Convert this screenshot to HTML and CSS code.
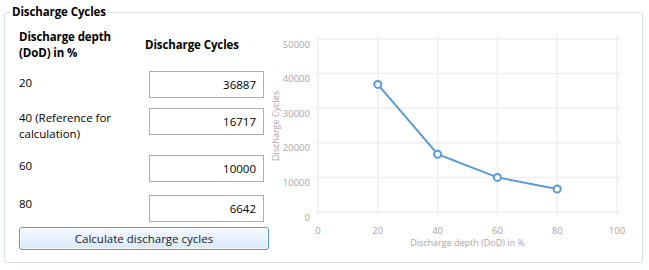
FILE: index.html
```html
<!DOCTYPE html>
<html>
<head>
<meta charset="utf-8">
<link rel="stylesheet" href="styles.css">
</head>
<body>
<fieldset class="group">
  <legend class="group-title">Discharge Cycles</legend>
  <div class="content">
    <div class="form">
      <div class="head head-left">Discharge depth<br>(DoD) in %</div>
      <div class="head head-right">Discharge Cycles</div>

      <div class="lbl r1">20</div>
      <div class="field"><input class="num" value="36887"></div>

      <div class="lbl r2">40 (Reference for<br>calculation)</div>
      <div class="field"><input class="num" value="16717"></div>

      <div class="lbl r3">60</div>
      <div class="field"><input class="num" value="10000"></div>

      <div class="lbl r4">80</div>
      <div class="field"><input class="num" value="6642"></div>

      <button class="calc">Calculate discharge cycles</button>
    </div>
    <svg class="chart" width="360" height="235" viewBox="0 0 360 235">
      <g class="grid">
        <line x1="45" y1="192" x2="351" y2="192"/>
        <line x1="45" y1="157.4" x2="351" y2="157.4"/>
        <line x1="45" y1="122.8" x2="351" y2="122.8"/>
        <line x1="45" y1="88.2" x2="351" y2="88.2"/>
        <line x1="45" y1="53.6" x2="351" y2="53.6"/>
        <line x1="45" y1="19" x2="351" y2="19"/>
        <line x1="48" y1="15" x2="48" y2="195"/>
        <line x1="107.8" y1="15" x2="107.8" y2="195"/>
        <line x1="167.6" y1="15" x2="167.6" y2="195"/>
        <line x1="227.4" y1="15" x2="227.4" y2="195"/>
        <line x1="287.2" y1="15" x2="287.2" y2="195"/>
        <line x1="347" y1="15" x2="347" y2="195"/>
      </g>
      <g class="ylab">
        <text x="40" y="200.5">0</text>
        <text x="40" y="165.9">10000</text>
        <text x="40" y="131.3">20000</text>
        <text x="40" y="96.7">30000</text>
        <text x="40" y="62.1">40000</text>
        <text x="40" y="27.5">50000</text>
      </g>
      <g class="xlab">
        <text x="48" y="214">0</text>
        <text x="107.8" y="214">20</text>
        <text x="167.6" y="214">40</text>
        <text x="227.4" y="214">60</text>
        <text x="287.2" y="214">80</text>
        <text x="347" y="214">100</text>
      </g>
      <text class="axis-title" x="197.5" y="226">Discharge depth (DoD) in %</text>
      <text class="axis-title" transform="translate(8.5 106) rotate(-90)" x="0" y="0">Discharge Cycles</text>
      <polyline class="series" points="107.8,64.4 167.6,134.2 227.4,157.4 287.2,169"/>
      <g class="pts">
        <circle cx="107.8" cy="64.4" r="3.5"/>
        <circle cx="167.6" cy="134.2" r="3.5"/>
        <circle cx="227.4" cy="157.4" r="3.5"/>
        <circle cx="287.2" cy="169" r="3.5"/>
      </g>
    </svg>
  </div>
</fieldset>
</body>
</html>
```
FILE: styles.css
```css
html, body {
  margin: 0;
  padding: 0;
  background: #ffffff;
}
body {
  width: 649px;
  height: 270px;
  overflow: hidden;
  font-family: "Open Sans", "Noto Sans", sans-serif;
  font-size: 11.5px;
  color: #000;
}
.group {
  box-sizing: border-box;
  margin: 4px 0 0 4px;
  width: 639px;
  height: 259px;
  padding: 0;
  border: 1px solid #d5dfe5;
  border-radius: 3px;
}
.group-title {
  font-weight: bold;
  font-size: 11.5px;
  line-height: 16px;
  padding: 0 2px;
  margin-left: 5px;
  letter-spacing: -0.1px;
}
.content {
  display: flex;
  align-items: flex-start;
  padding-left: 14px;
}
.form {
  width: 250px;
  margin-top: 9px;
  display: grid;
  grid-template-columns: 130px 115px 5px;
  grid-template-rows: 42px 37px 47px 40px 32px 23px;
  line-height: 16px;
}
.head {
  font-weight: bold;
  font-size: 11.5px;
  letter-spacing: -0.1px;
}
.head-right {
  grid-column: 2 / 4;
  margin-top: 8px;
  margin-left: -4px;
}
.lbl {
  grid-column: 1;
}
.r1 { padding-top: 4px; }
.r2 { padding-top: 2px; }
.r3 { padding-top: 3px; }
.r4 { padding-top: 1px; }
.field {
  grid-column: 2;
}
.num {
  box-sizing: border-box;
  width: 115px;
  height: 27px;
  margin: 0;
  border: 1px solid #abadb3;
  padding: 0 7px 0 4px;
  text-align: right;
  font-family: inherit;
  font-size: 11.5px;
  color: #000;
  background: #fff;
}
.calc {
  grid-column: 1 / 4;
  box-sizing: border-box;
  width: 250px;
  height: 23px;
  margin: 0;
  padding: 0;
  border: 1px solid #5f95cf;
  border-radius: 3px;
  background: linear-gradient(#f3f9fe 0%, #e6f1fc 50%, #dae9f9 100%);
  box-shadow: inset 0 0 0 1px rgba(255,255,255,0.7);
  font-family: inherit;
  font-size: 11.5px;
  color: #1a1a1a;
}
.chart {
  display: block;
  margin-top: 0;
  margin-left: 1px;
}
.grid line {
  stroke: #efefef;
  stroke-width: 1.5;
}
.ylab text, .xlab text, .axis-title {
  font-family: "Open Sans", "Noto Sans", sans-serif;
  font-size: 9.5px;
  fill: #aaa6a6;
}
.ylab text { text-anchor: end; }
.xlab text { text-anchor: middle; }
.axis-title { text-anchor: middle; font-size: 9px; }
.series {
  fill: none;
  stroke: #5b9bd5;
  stroke-width: 2;
}
.pts circle {
  fill: #fff;
  stroke: #5b9bd5;
  stroke-width: 2;
}
```
